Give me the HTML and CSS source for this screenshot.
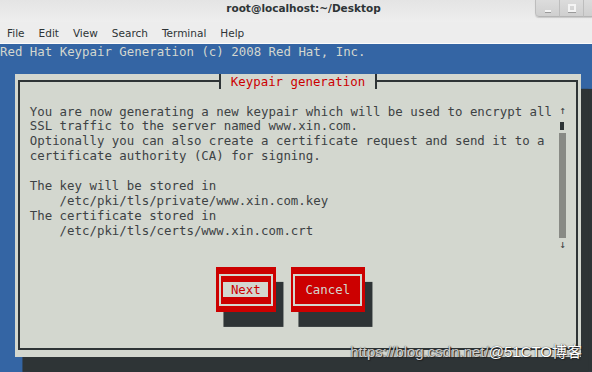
FILE: index.html
```html
<!DOCTYPE html>
<html lang="en">
<head>
	<title>root@localhost:~/Desktop</title>
	<meta charset="utf-8" />
	<link rel="stylesheet" href="styles.css">
</head>
<body>
	<div id="window">
		<header class="titlebar">
			<div class="title">root@localhost:~/Desktop</div>
			<div class="controls">
				<span class="ctl"><span class="min"></span></span>
				<span class="ctl"><span class="max"></span></span>
				<span class="ctl"></span>
			</div>
		</header>
		<nav class="menubar">
			<span>File</span>
			<span>Edit</span>
			<span>View</span>
			<span>Search</span>
			<span>Terminal</span>
			<span>Help</span>
		</nav>
		<main class="screen">
			<div class="row banner">Red Hat Keypair Generation (c) 2008 Red Hat, Inc.</div>
			<div class="row"></div>
			<section class="dialog">
				<div class="frame">
					<h1 class="frame-title">Keypair generation</h1>
					<div class="body">
<pre class="msg">You are now generating a new keypair which will be used to encrypt all
SSL traffic to the server named www.xin.com.
Optionally you can also create a certificate request and send it to a
certificate authority (CA) for signing.

The key will be stored in
    /etc/pki/tls/private/www.xin.com.key
The certificate stored in
    /etc/pki/tls/certs/www.xin.com.crt</pre>
						<div class="scrollbar">
							<span class="arrow">↑</span>
							<span class="thumb"><i></i></span>
							<span class="track"></span>
							<span class="arrow">↓</span>
						</div>
					</div>
					<div class="buttons">
						<button class="btn next"><span class="btn-frame"><span class="btn-label">Next</span></span></button>
						<button class="btn cancel"><span class="btn-frame"><span class="btn-label">Cancel</span></span></button>
					</div>
				</div>
			</section>
		</main>
		<div class="watermark"><span class="wm-url">https://blog.csdn.net/</span>@51CTO博客</div>
	</div>
</body>
</html>
```

FILE: styles.css
```css
html, body {
	margin: 0;
	height: 100%;
	overflow: hidden;
}
body {
	font-family: "DejaVu Sans", sans-serif;
	background: #3465a4;
}
#window {
	--cw: 7.45px;
	--rh: 14.9px;
	position: relative;
	width: 592px;
	height: 372px;
	overflow: hidden;
}

/* window chrome */
.titlebar {
	display: flex;
	height: 22px;
	background: linear-gradient(180deg, #e4e4e4 0%, #eeeeee 100%);
}
.title {
	flex: 1;
	padding-left: 72px;
	line-height: 16px;
	text-align: center;
	font-size: 10.5px;
	font-weight: bold;
	color: #2e3436;
}
.controls {
	display: flex;
	width: 57px;
	height: 17px;
	overflow: hidden;
	border-bottom-left-radius: 4px;
	box-shadow: 0 1px 1px rgba(0,0,0,.15);
}
.ctl {
	flex: 0 0 23px;
	display: flex;
	align-items: center;
	justify-content: center;
	background: linear-gradient(180deg, #dcdcdc, #cfcfcf);
	border-left: 1px solid #bdbdbd;
	border-bottom: 1px solid #b5b5b5;
}
.ctl:first-child {
	border-bottom-left-radius: 4px;
}
.ctl .min {
	width: 6px;
	height: 2px;
	margin-top: 5px;
	background: #f4f4f4;
	box-shadow: 0 1px 0 #9a9a9a;
}
.ctl .max {
	width: 4px;
	height: 4px;
	border: 2px solid #f4f4f4;
	box-shadow: 0 1px 0 #9a9a9a;
}
.menubar {
	display: flex;
	height: 21px;
	line-height: 22px;
	font-size: 10.5px;
	color: #2e3436;
	background: #ededed;
	border-bottom: 1px solid #fbfbfb;
}
.menubar span {
	padding: 0 7px;
}

/* terminal */
.screen {
	height: 328px;
	overflow: hidden;
	background: #3465a4;
	font-family: "DejaVu Sans Mono", monospace;
	font-size: 12.4px;
	line-height: calc(var(--rh) + 2px);
	color: #3d4244;
}
.row {
	height: var(--rh);
	white-space: pre;
}
.banner {
	color: #d3d7cf;
}
.dialog {
	display: flex;
	box-sizing: border-box;
	width: calc(var(--cw) * 76);
	height: calc(var(--rh) * 19);
	margin-left: calc(var(--cw) * 2);
	padding: calc(var(--rh) / 2 - 1px) calc(var(--cw) / 2 - 1px);
	background: #d3d7cf;
	box-shadow: var(--cw) var(--rh) 0 #2e3436, calc(var(--cw) * 2) var(--rh) 0 #2e3436;
}
.frame {
	flex: 1;
	display: flex;
	flex-direction: column;
	border: 2px solid #2e3436;
}
.frame-title {
	align-self: center;
	box-sizing: border-box;
	width: calc(var(--cw) * 21 + 2px);
	height: var(--rh);
	margin: calc(var(--rh) / -2 - 1px) 0 0;
	border-left: 2px solid #2e3436;
	border-right: 2px solid #2e3436;
	background: #d3d7cf;
	color: #cc0000;
	font-size: inherit;
	font-weight: normal;
	text-align: center;
}
.body {
	display: flex;
	margin: var(--rh) 0 0 calc(var(--cw) * 1.5 - 1px);
}
.msg {
	width: calc(var(--cw) * 71);
	margin: 0;
	font: inherit;
	line-height: var(--rh);
	padding-top: 1px;
	white-space: pre;
}
.scrollbar {
	display: flex;
	flex-direction: column;
	width: var(--cw);
	line-height: var(--rh);
	font-size: 11px;
}
.scrollbar span {
	height: var(--rh);
	text-align: center;
}
.thumb {
	display: flex;
	align-items: center;
	justify-content: center;
}
.thumb i {
	width: 4px;
	height: 8px;
	background: #2e3436;
}
.scrollbar .track {
	height: calc(var(--rh) * 7);
	background: #888a85;
}
.buttons {
	display: flex;
	gap: calc(var(--cw) * 2);
	margin: var(--rh) 0 0 calc(var(--cw) * 26.5 - 1px);
}
.btn {
	display: flex;
	box-sizing: border-box;
	width: calc(var(--cw) * 8);
	height: calc(var(--rh) * 3);
	padding: calc(var(--rh) / 2 - 1px) calc(var(--cw) / 2 - 1px);
	border: 0;
	background: #cc0000;
	box-shadow: var(--cw) var(--rh) 0 #2e3436;
	font: inherit;
	line-height: calc(var(--rh) + 2px);
	cursor: pointer;
}
.btn.cancel {
	width: calc(var(--cw) * 10);
}
.btn-frame {
	flex: 1;
	display: flex;
	align-items: center;
	justify-content: center;
	border: 2px solid #d3d7cf;
}
.btn-label {
	width: calc(var(--cw) * 6);
	height: var(--rh);
	text-align: center;
	color: #d3d7cf;
}
.cancel .btn-label {
	width: calc(var(--cw) * 8);
}
.next .btn-label {
	background: #d3d7cf;
	color: #cc0000;
}

/* site watermark laid over the screenshot */
.watermark {
	position: absolute;
	right: 10px;
	bottom: 11px;
	font-family: "Liberation Sans", "Noto Sans CJK SC", sans-serif;
	font-size: 15px;
	line-height: 18px;
	color: #fff;
	text-shadow: 0 0 1px #111, 1px 1px 1px #222;
}
.wm-url {
	color: rgba(240,240,240,.85);
}
```
